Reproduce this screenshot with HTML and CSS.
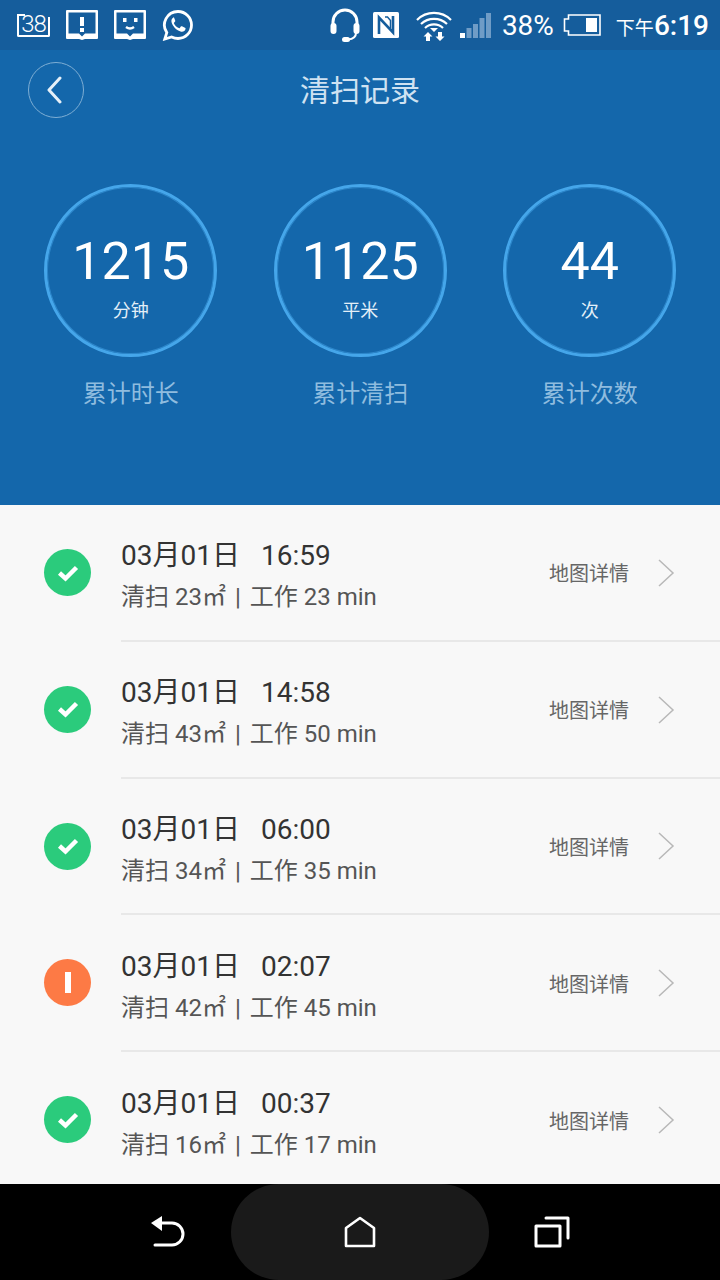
FILE: index.html
```html
<!DOCTYPE html>
<html lang="zh-CN">
<head>
<meta charset="utf-8">
<title>清扫记录</title>
<link rel="stylesheet" href="styles.css">
</head>
<body>
<div class="app">
  <div class="status">
    <div class="status-left">
      <span class="cal">38</span>
      <svg class="ic-msg" width="32" height="30" viewBox="0 0 32 30"><path fill="#fff" d="M1 0h30a1 1 0 0 1 1 1v27a1 1 0 0 1-1 1H19l-3 1-3-1H1a1 1 0 0 1-1-1V1a1 1 0 0 1 1-1z"/><path fill="#155d9c" d="M2.500 2.500h27v21H19l-3 3-3-3H2.500z"/><rect x="14" y="7" width="4" height="9" fill="#fff"/><rect x="14" y="18" width="4" height="4" fill="#fff"/></svg>
      <svg class="ic-msg" width="32" height="30" viewBox="0 0 32 30"><path fill="#fff" d="M1 0h30a1 1 0 0 1 1 1v27a1 1 0 0 1-1 1H19l-3 1-3-1H1a1 1 0 0 1-1-1V1a1 1 0 0 1 1-1z"/><path fill="#155d9c" d="M2.500 2.500h27v21H19l-3 3-3-3H2.500z"/><rect x="9" y="8" width="3.500" height="4" fill="#fff"/><rect x="20" y="8" width="3.500" height="4" fill="#fff"/><path d="M12 17q4 3 8 0" fill="none" stroke="#fff" stroke-width="2.400"/></svg>
      <svg width="32" height="32" viewBox="0 0 32 32"><path fill="none" stroke="#fff" stroke-width="2.800" d="M16 2.500a13.500 13.500 0 0 1 0 27c-2.400 0-4.500-.6-6.400-1.600L2.800 30l2-6.400A13.500 13.500 0 0 1 16 2.500z"/><path fill="#fff" d="M11.500 8.500c-1.500.6-2.500 2.400-2 4.500 1 4 4.500 8 9 9.500 2.500.7 4.500-.4 5-2.500.2-.7 0-1-.5-1.300l-3-1.400c-.5-.2-.9-.1-1.200.3l-1 1.300c-.3.300-.6.300-1 .2-2.200-1-3.800-2.500-4.800-4.500-.2-.4-.1-.7.2-1l.9-1.100c.2-.3.3-.6.100-1l-1.200-2.900c-.2-.5-.5-.7-.5-.6z"/></svg>
    </div>
    <div class="status-right">
      <svg class="ic-head" width="32" height="36" viewBox="0 0 32 36"><path d="M4 20v-5a12 12 0 0 1 24 0v5" fill="none" stroke="#fff" stroke-width="3"/><rect x="1.500" y="16" width="6" height="11" rx="3" fill="#fff"/><rect x="24.500" y="16" width="6" height="11" rx="3" fill="#fff"/><path d="M27 26c0 4-3 6-8 6.500" fill="none" stroke="#fff" stroke-width="2"/><rect x="13" y="30" width="8" height="5" rx="2.500" fill="#fff"/></svg>
      <svg class="ic-nfc" width="26" height="26" viewBox="0 0 26 26"><rect width="26" height="26" rx="1.500" fill="#fff"/><path d="M6 22V5.500L20 20.500V4" fill="none" stroke="#155d9c" stroke-width="2.600"/><path d="M12 5h2.500l3 3.500v8" fill="none" stroke="#155d9c" stroke-width="1.500"/></svg>
      <svg class="ic-wifi" width="36" height="34" viewBox="0 0 36 34"><g fill="none" stroke="#fff" stroke-width="2.200"><path d="M1 12a24 24 0 0 1 34 0"/><path d="M5 16a19 19 0 0 1 26 0"/><path d="M9 20a13 13 0 0 1 18 0"/></g><path d="M18 24l-4-4h8z" fill="#fff"/><path fill="#fff" d="M12 24l4.500 4.500h-2.500V33h-4v-4.500H7.500zM24 33l-4.500-4.500h2.500V24h4v4.500h2.500z"/></svg>
      <svg class="ic-sig" width="31" height="25" viewBox="0 0 31 25"><rect x="0" y="20" width="5" height="5" fill="#fff"/><g fill="#6f9cc6"><rect x="6.500" y="15" width="5" height="10"/><rect x="13" y="11" width="5" height="14"/><rect x="19.500" y="5" width="5" height="20"/><rect x="26" y="0" width="5" height="25"/></g></svg>
      <span class="pct">38%</span>
      <svg class="ic-bat" width="38" height="22" viewBox="0 0 38 22"><path d="M5.500 1h31.500v20H5.500v-4H1.500V5h4z" fill="none" stroke="#fff" stroke-width="1.600"/><rect x="23" y="4" width="11" height="14" fill="#fff"/></svg>
      <span class="clock"><span class="ampm">下午</span>6:19</span>
    </div>
  </div>

  <div class="hero">
    <div class="topbar">
      <button class="back" type="button"><svg width="16" height="28" viewBox="0 0 16 28"><path d="M14 2L3 14l11 12" fill="none" stroke="#e6f0f8" stroke-width="3" stroke-linecap="round" stroke-linejoin="round"/></svg></button>
      <h1 class="title">清扫记录</h1>
    </div>
    <div class="stats">
      <div class="stat">
        <div class="ring"><span class="num">1215</span><span class="unit">分钟</span></div>
        <div class="label">累计时长</div>
      </div>
      <div class="stat">
        <div class="ring"><span class="num">1125</span><span class="unit">平米</span></div>
        <div class="label">累计清扫</div>
      </div>
      <div class="stat">
        <div class="ring"><span class="num">44</span><span class="unit">次</span></div>
        <div class="label">累计次数</div>
      </div>
    </div>
  </div>

  <div class="list">
    <div class="row">
      <span class="badge ok"><svg width="24" height="18" viewBox="0 0 24 18"><path d="M3.500 9l6 5.500L20.500 3.500" fill="none" stroke="#fff" stroke-width="4.500"/></svg></span>
      <div class="body">
        <div class="info">
          <div class="when"><span>03月01日</span><span>16:59</span></div>
          <div class="meta"><span>清扫 23㎡</span><span class="sep">|</span><span>工作 23 min</span></div>
        </div>
        <span class="link">地图详情</span>
        <svg class="chev" width="18" height="28" viewBox="0 0 18 28"><path d="M2 1l14 13L2 27" fill="none" stroke="#b8b8b8" stroke-width="1.500"/></svg>
      </div>
    </div>
    <div class="row">
      <span class="badge ok"><svg width="24" height="18" viewBox="0 0 24 18"><path d="M3.500 9l6 5.500L20.500 3.500" fill="none" stroke="#fff" stroke-width="4.500"/></svg></span>
      <div class="body">
        <div class="info">
          <div class="when"><span>03月01日</span><span>14:58</span></div>
          <div class="meta"><span>清扫 43㎡</span><span class="sep">|</span><span>工作 50 min</span></div>
        </div>
        <span class="link">地图详情</span>
        <svg class="chev" width="18" height="28" viewBox="0 0 18 28"><path d="M2 1l14 13L2 27" fill="none" stroke="#b8b8b8" stroke-width="1.500"/></svg>
      </div>
    </div>
    <div class="row">
      <span class="badge ok"><svg width="24" height="18" viewBox="0 0 24 18"><path d="M3.500 9l6 5.500L20.500 3.500" fill="none" stroke="#fff" stroke-width="4.500"/></svg></span>
      <div class="body">
        <div class="info">
          <div class="when"><span>03月01日</span><span>06:00</span></div>
          <div class="meta"><span>清扫 34㎡</span><span class="sep">|</span><span>工作 35 min</span></div>
        </div>
        <span class="link">地图详情</span>
        <svg class="chev" width="18" height="28" viewBox="0 0 18 28"><path d="M2 1l14 13L2 27" fill="none" stroke="#b8b8b8" stroke-width="1.500"/></svg>
      </div>
    </div>
    <div class="row">
      <span class="badge warn"><span class="bar"></span></span>
      <div class="body">
        <div class="info">
          <div class="when"><span>03月01日</span><span>02:07</span></div>
          <div class="meta"><span>清扫 42㎡</span><span class="sep">|</span><span>工作 45 min</span></div>
        </div>
        <span class="link">地图详情</span>
        <svg class="chev" width="18" height="28" viewBox="0 0 18 28"><path d="M2 1l14 13L2 27" fill="none" stroke="#b8b8b8" stroke-width="1.500"/></svg>
      </div>
    </div>
    <div class="row">
      <span class="badge ok"><svg width="24" height="18" viewBox="0 0 24 18"><path d="M3.500 9l6 5.500L20.500 3.500" fill="none" stroke="#fff" stroke-width="4.500"/></svg></span>
      <div class="body">
        <div class="info">
          <div class="when"><span>03月01日</span><span>00:37</span></div>
          <div class="meta"><span>清扫 16㎡</span><span class="sep">|</span><span>工作 17 min</span></div>
        </div>
        <span class="link">地图详情</span>
        <svg class="chev" width="18" height="28" viewBox="0 0 18 28"><path d="M2 1l14 13L2 27" fill="none" stroke="#b8b8b8" stroke-width="1.500"/></svg>
      </div>
    </div>
  </div>

  <div class="nav">
    <svg width="36" height="34" viewBox="0 0 36 34"><path d="M8 8h14a10 10 0 0 1 0 22H5" fill="none" stroke="#fff" stroke-width="3" stroke-linecap="round"/><path d="M12 1v15L1 8z" fill="#fff"/></svg>
    <div class="home"><svg width="32" height="32" viewBox="0 0 32 32"><path d="M2 12L16 2l14 10v18H2z" fill="none" stroke="#fff" stroke-width="2.600" stroke-linejoin="round"/></svg></div>
    <svg width="36" height="34" viewBox="0 0 36 34"><rect x="2" y="11" width="24" height="20" fill="none" stroke="#fff" stroke-width="3" stroke-linejoin="round"/><path d="M12 3h22v20" fill="none" stroke="#fff" stroke-width="3" stroke-linecap="round" stroke-linejoin="round"/></svg>
  </div>
</div>
</body>
</html>
```

FILE: styles.css
```css
* { box-sizing: border-box; }
html, body { margin: 0; padding: 0; }
body {
  font-family: Roboto, "Noto Sans CJK SC", sans-serif;
  background: #000;
}
.app {
  width: 720px;
  height: 1280px;
  display: flex;
  flex-direction: column;
  overflow: hidden;
}

/* status bar */
.status {
  height: 50px;
  flex: none;
  background: #155d9c;
  color: #fff;
  display: flex;
  align-items: center;
  justify-content: space-between;
  padding: 0 11px 0 17px;
}
.status-left, .status-right { display: flex; align-items: center; }
.status-left { gap: 16px; }
.cal {
  position: relative;
  width: 33px;
  height: 20px;
  margin-top: 3px;
  border: 2px solid #fff;
  border-top: 0;
  border-radius: 0 0 2px 2px;
  font-size: 24px;
  font-weight: 300;
  line-height: 14px;
  text-align: center;
  letter-spacing: -1px;
}
.cal::before {
  content: "";
  position: absolute;
  left: -2px;
  top: -3px;
  width: 6px;
  height: 3px;
  border: 2px solid #fff;
  border-width: 2px 0 0 2px;
}
.ic-head { margin-right: 12px; }
.ic-nfc { margin-right: 17px; }
.ic-wifi { margin-right: 8px; }
.ic-sig { margin-right: 11px; }
.pct { font-size: 28px; margin-right: 9px; }
.ic-bat { margin-right: 15px; }
.clock { font-size: 28px; font-weight: 500; white-space: nowrap; }
.ampm { font-size: 19px; font-weight: 400; }

/* hero */
.hero {
  height: 455px;
  flex: none;
  background: #1467ab;
}
.topbar {
  position: relative;
  height: 83px;
  padding: 12px 0 0 28px;
}
.back {
  width: 56px;
  height: 56px;
  padding: 0 4px 0 0;
  background: none;
  border: 1px solid #7eaed4;
  border-radius: 50%;
  display: flex;
  align-items: center;
  justify-content: center;
}
.title {
  position: absolute;
  left: 0;
  right: 0;
  top: 21px;
  margin: 0;
  text-align: center;
  font-size: 30px;
  line-height: 40px;
  font-weight: 400;
  color: #cfe2f2;
}
.stats {
  display: grid;
  grid-template-columns: repeat(3, 229.5px);
  padding: 51px 0 0 16px;
}
.stat {
  display: flex;
  flex-direction: column;
  align-items: center;
}
.ring {
  width: 173px;
  height: 173px;
  border: 3px solid #45a6ea;
  border-radius: 50%;
  box-shadow: inset 0 0 0 1px rgba(69, 166, 234, 0.5);
  display: flex;
  flex-direction: column;
  align-items: center;
  color: #fff;
}
.num {
  font-size: 52px;
  line-height: 60px;
  margin-top: 45px;
}
.unit {
  font-size: 18px;
  line-height: 26px;
  margin-top: 6px;
  color: #e3eff8;
}
.label {
  margin-top: 21px;
  font-size: 24px;
  line-height: 32px;
  color: #8fbcdf;
}

/* list */
.list {
  flex: 1;
  background: #f8f8f8;
  overflow: hidden;
}
.row {
  display: flex;
  align-items: flex-start;
  height: 136.8px;
}
.badge {
  flex: none;
  width: 47px;
  height: 47px;
  margin: 44px 30px 0 44px;
  border-radius: 50%;
  display: flex;
  align-items: center;
  justify-content: center;
}
.ok { background: #2bcb7c; }
.warn { background: #fd7a45; }
.bar { width: 6px; height: 21px; background: #fff; }
.body {
  flex: 1;
  height: 100%;
  display: flex;
  align-items: center;
  padding: 0 45px 0 0;
  border-bottom: 2px solid #e8e8e8;
}
.info { flex: 1; padding-top: 7px; }
.when {
  display: flex;
  gap: 21px;
  font-size: 28px;
  line-height: 36px;
  color: #333;
}
.meta {
  display: flex;
  gap: 9px;
  margin-top: 7px;
  font-size: 24px;
  line-height: 32px;
  color: #555;
}
.link {
  font-size: 20px;
  color: #666;
  margin-right: 28px;
  padding-top: 1px;
}
.chev { flex: none; margin-top: 1px; }

/* nav */
.nav {
  height: 96px;
  flex: none;
  background: #000;
  display: flex;
  align-items: flex-start;
  justify-content: center;
  gap: 45px;
}
.nav > svg { margin-top: 31px; }
.home {
  width: 258px;
  height: 96px;
  border-radius: 48px;
  background: #1a1a1a;
  padding-top: 32px;
  display: flex;
  justify-content: center;
  align-items: flex-start;
}
```
